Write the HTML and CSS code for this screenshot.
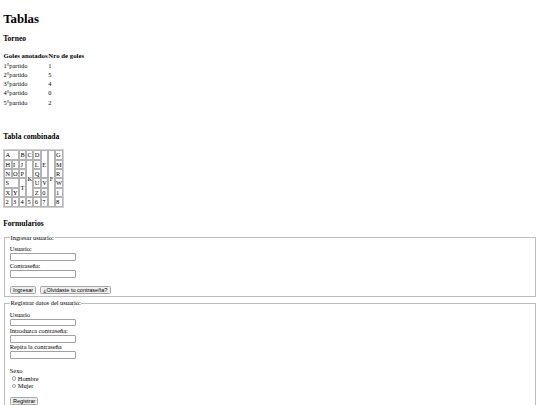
FILE: index.html
```html
<!DOCTYPE html>
<html lang="es">
<head>
<meta charset="utf-8">
<title>Tablas</title>
<link rel="stylesheet" href="styles.css">
</head>
<body class="page">
<h1 class="title">Tablas</h1>
<h3 class="sub">Torneo</h3>
<table class="plain">
<tr><th>Goles anotados</th><th>Nro de goles</th></tr>
<tr><td>1°partido</td><td>1</td></tr>
<tr><td>2°partido</td><td>5</td></tr>
<tr><td>3°partido</td><td>4</td></tr>
<tr><td>4°partido</td><td>0</td></tr>
<tr><td>5°partido</td><td>2</td></tr>
</table>
<br><br>
<h3 class="sub">Tabla combinada</h3>
<table class="grid">
<tr><td colspan="2">A</td><td>B</td><td>C</td><td>D</td><td rowspan="3">E</td><td rowspan="6">F</td><td>G</td></tr>
<tr><td>H</td><td>I</td><td>J</td><td rowspan="4">K</td><td>L</td><td>M</td></tr>
<tr><td>N</td><td>O</td><td>P</td><td>Q</td><td>R</td></tr>
<tr><td colspan="2">S</td><td rowspan="2">T</td><td>U</td><td>V</td><td>W</td></tr>
<tr><td>X</td><td>Y</td><td>Z</td><td>0</td><td>1</td></tr>
<tr><td>2</td><td>3</td><td>4</td><td>5</td><td>6</td><td>7</td><td>8</td></tr>
</table>
<h3 class="sub forms">Formularios</h3>
<form>
<fieldset class="box">
<legend class="cap">Ingresar usuario:</legend>
<label>Usuario:</label><br>
<input class="field" type="text"><br>
<label>Contraseña:</label><br>
<input class="field" type="password"><br><br>
<button class="btn" type="button">Ingresar</button>
<button class="btn" type="button">¿Olvidaste tu contraseña?</button>
</fieldset>
<fieldset class="box second">
<legend class="cap">Registrar datos del usuario:</legend>
<label>Usuario</label><br>
<input class="field" type="text"><br>
<label>Introduzca contraseña:</label><br>
<input class="field" type="password"><br>
<label>Repita la contraseña</label><br>
<input class="field" type="password"><br><br>
Sexo<br>
<input class="radio" type="radio" name="sexo">Hombre<br>
<input class="radio" type="radio" name="sexo">Mujer<br><br>
<button class="btn" type="button">Registrar</button>
</fieldset>
</form>
</body>
</html>
```
FILE: styles.css
```css
.page {
  margin: 3.2px;
  font-family: "Liberation Serif", "Times New Roman", serif;
  font-size: 6.4px;
  line-height: 7.4px;
  color: #000;
  background: #fff;
}

.title {
  font-size: 12.8px;
  line-height: 14.7px;
  margin: 8.6px 0;
}

.sub {
  font-size: 7.6px;
  line-height: 8.6px;
  margin: 7.5px 0;
}

.plain {
  border-spacing: 0 1px;
  margin-bottom: 3px;
}

.plain th,
.plain td {
  padding: 0 0.4px;
  line-height: 8.2px;
}

.plain th {
  font-weight: bold;
  font-size: 6.8px;
  line-height: 8.6px;
}

.plain td {
  text-align: left;
}

.grid {
  border: 1px solid #d0d0d0;
  border-spacing: 0.6px;
  margin-bottom: 12px;
}

.grid td {
  border: 1px solid #b3b3b3;
  padding: 0 0.4px;
  line-height: 7.4px;
}

.forms {
  margin-bottom: 6px;
}

.box {
  margin: 0 0.8px;
  border: 1px solid #bdbdbd;
  padding: 3.8px 4.8px 1.6px;
  min-width: 0;
}

.second {
  margin-top: 2.5px;
}

.cap {
  padding: 0 0.8px;
}

.field {
  box-sizing: border-box;
  width: 66px;
  height: 7.8px;
  margin: 0.6px 0 0.6px;
  padding: 0;
  border: 1px solid #a0a0a0;
  border-radius: 1px;
  background: #fff;
  vertical-align: middle;
}

.btn {
  box-sizing: border-box;
  height: 8px;
  font: 5.5px "Liberation Sans", Arial, sans-serif;
  line-height: 6px;
  color: #000;
  border: 1px solid #a6a6a6;
  border-radius: 1.5px;
  background: #efefef;
  padding: 0 2.2px;
  margin: 0 2px 0 0;
  vertical-align: middle;
}

.radio {
  appearance: none;
  box-sizing: border-box;
  width: 4.6px;
  height: 4.6px;
  margin: 1.2px 1.4px 0 2px;
  border: 1px solid #a0a0a0;
  border-radius: 50%;
  background: #fff;
  vertical-align: -0.4px;
}
```
